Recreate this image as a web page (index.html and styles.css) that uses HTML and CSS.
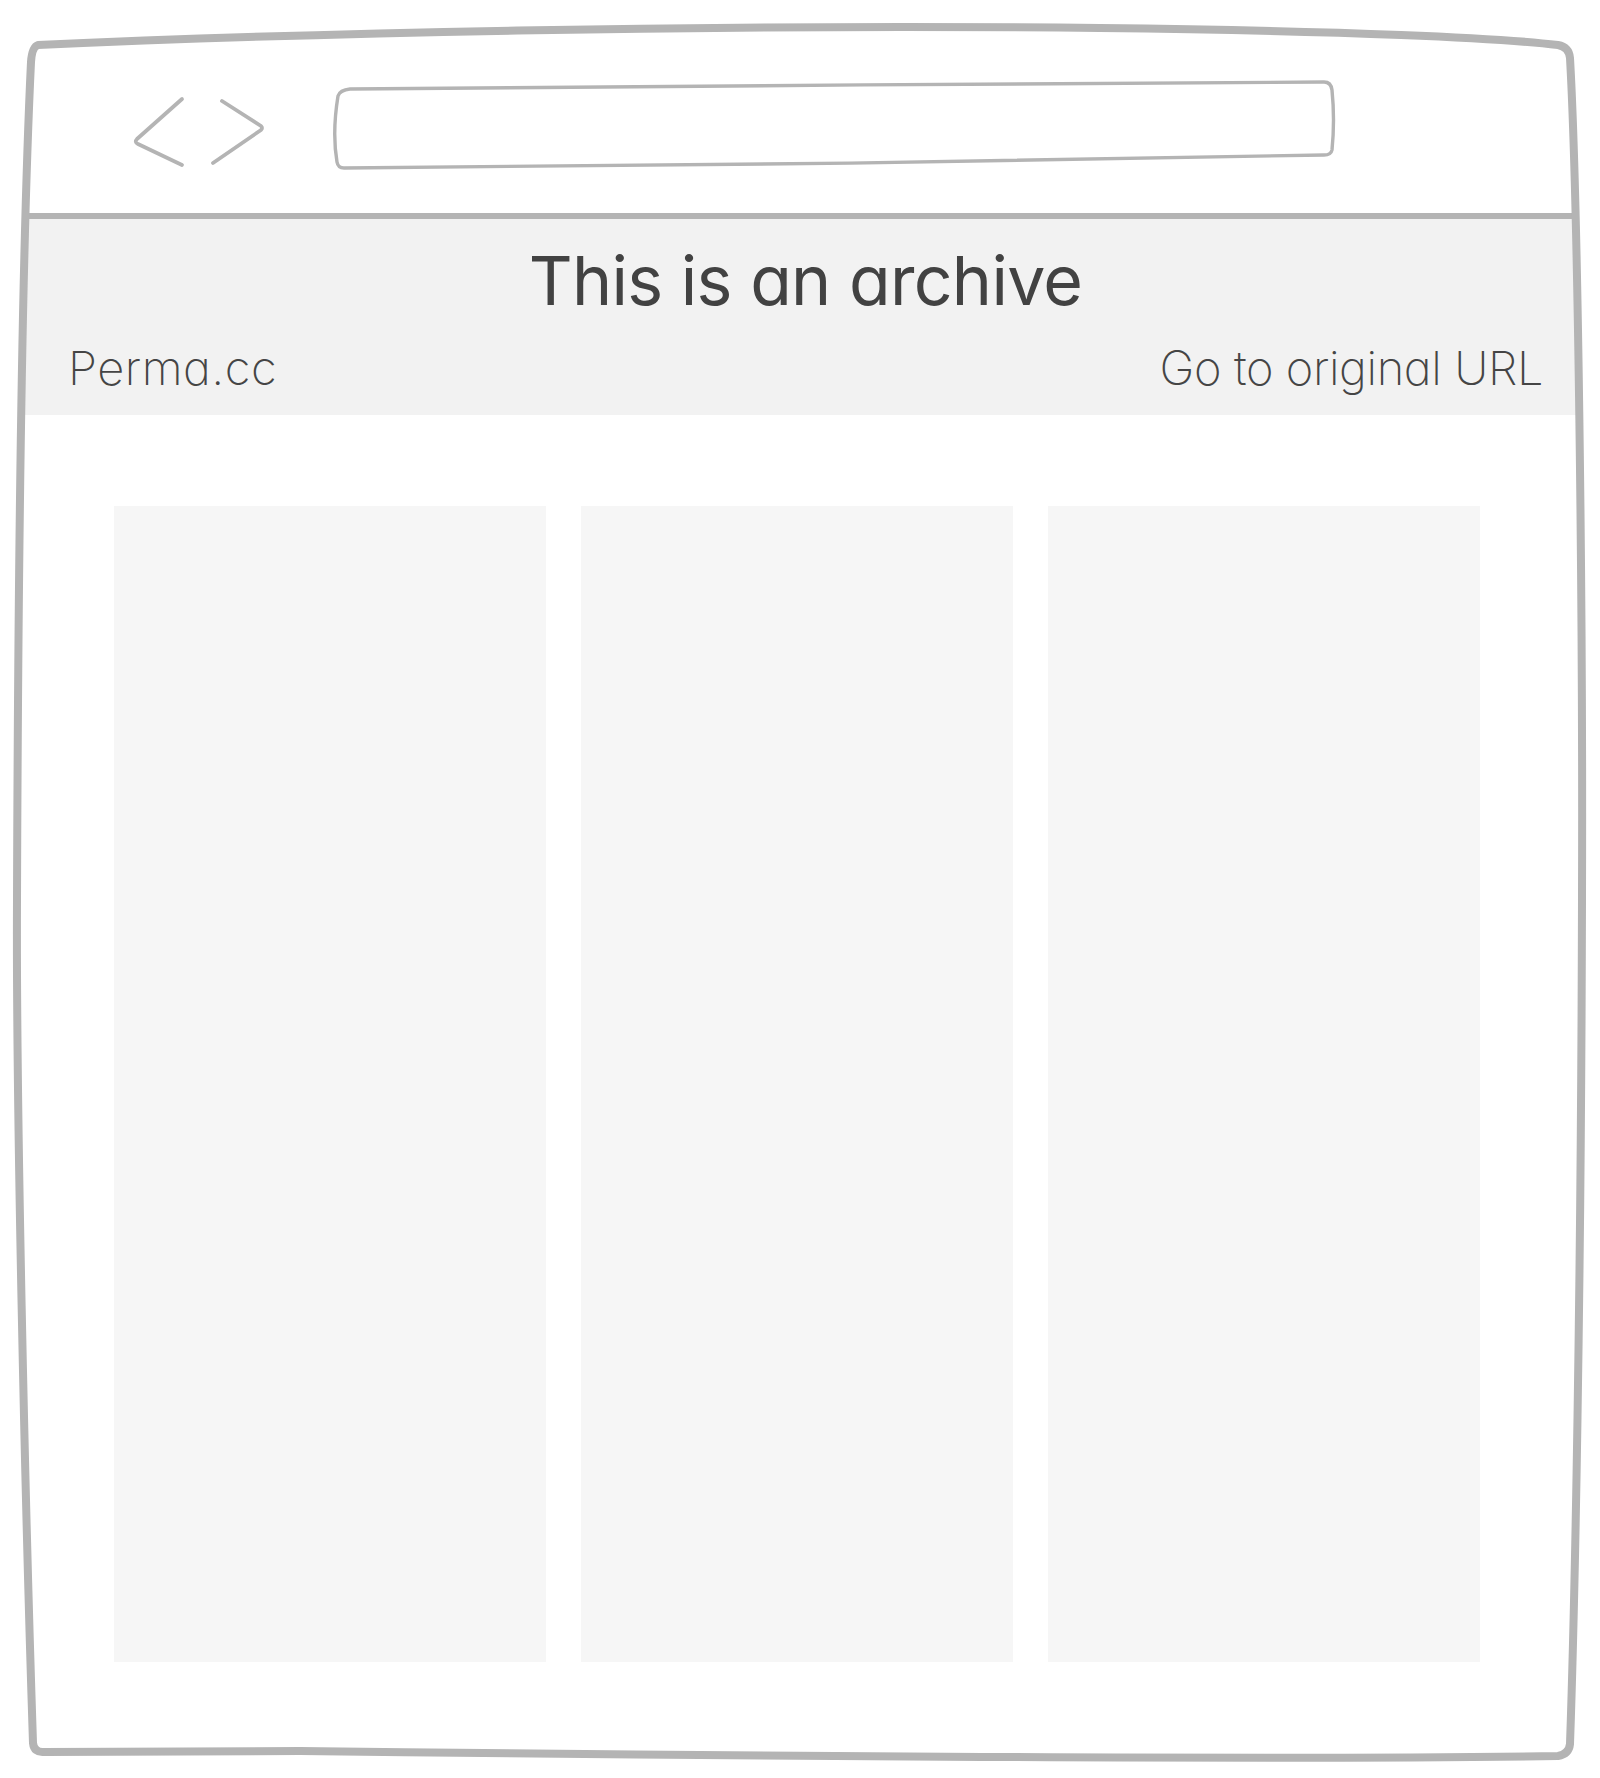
FILE: index.html
```html
<!DOCTYPE html>
<html lang="en">
<head>
<meta charset="utf-8">
<title>This is an archive</title>
<link rel="stylesheet" href="styles.css">
</head>
<body>
<div class="window">
  <div class="toolbar">
    <svg class="nav" width="140" height="94" viewBox="0 0 140 94" aria-hidden="true">
      <path d="M54 21 L9 61 Q6 64 10 66 L54 87" />
      <path d="M94 23 L133 48 Q135 50 133 52 L85 85" />
    </svg>
    <svg class="urlbar" width="1008" height="94" viewBox="0 0 1008 94" aria-hidden="true">
      <path d="M20 11 C 300 8, 700 6, 994 4 Q 1001 4 1002 12 Q 1005 42 1002 72 Q 1001 77 994 77 C 700 83, 300 89, 14 90 Q 8 90 7 84 Q 2 55 8 18 Q 10 12 20 11 Z" />
    </svg>
  </div>
  <div class="banner">
    <h1 class="title">This is an archive</h1>
    <div class="links">
      <span class="link link-home">Perma.cc</span>
      <span class="link">Go to original URL</span>
    </div>
  </div>
  <div class="content">
    <div class="col"></div>
    <div class="col"></div>
    <div class="col"></div>
  </div>
</div>
<svg class="frame" width="1600" height="1778" viewBox="0 0 1600 1778" aria-hidden="true">
  <path d="M38 45 C 300 33, 700 24, 1100 28 C 1350 31, 1500 38, 1558 45 Q 1569 47 1570 58 C 1578 200, 1583 600, 1582 900 C 1581 1300, 1575 1600, 1570 1744 Q 1569 1754 1558 1756 C 1300 1760, 700 1756, 300 1751 L 44 1752 Q 34 1753 33 1743 C 25 1500, 16 1100, 17 900 C 18 600, 22 250, 31 62 Q 32 47 38 45 Z" />
</svg>
</body>
</html>
```
FILE: styles.css
```css
html, body {
  margin: 0;
  padding: 0;
  background: #ffffff;
}

body {
  position: relative;
  width: 1600px;
  height: 1778px;
  overflow: hidden;
  font-family: "Inter", "Lato", "Liberation Sans", sans-serif;
  font-feature-settings: "cv11" 1;
  color: #434343;
}

.window {
  margin: 0 21px 0 22px;
}

.toolbar {
  display: flex;
  align-items: flex-start;
  height: 219px;
  box-sizing: border-box;
  padding: 78px 0 0 106px;
  border-bottom: 6px solid #b4b4b4;
}

.toolbar svg path {
  fill: none;
  stroke: #b4b4b4;
  stroke-linecap: round;
  stroke-linejoin: round;
}

.nav path {
  stroke-width: 3.8;
}

.urlbar {
  margin-left: 62px;
}

.urlbar path {
  stroke-width: 3.4;
}

.banner {
  background: #f2f2f2;
  height: 196px;
  box-sizing: border-box;
  padding: 21px 36px 0 46px;
  display: flex;
  flex-direction: column;
}

.title {
  margin: 0;
  font-size: 68px;
  line-height: 80px;
  font-weight: 400;
  text-align: center;
  letter-spacing: -0.7px;
  color: #424242;
}

.links {
  display: flex;
  justify-content: space-between;
  margin-top: 20px;
}

.link {
  font-size: 47px;
  line-height: 56px;
  font-weight: 200;
  letter-spacing: -0.4px;
  color: #454545;
}

.link-home {
  letter-spacing: 0.5px;
}

.content {
  display: grid;
  grid-template-columns: repeat(3, 432px);
  column-gap: 35px;
  padding: 91px 0 0 92px;
}

.col {
  height: 1156px;
  background: #f6f6f6;
}

.frame {
  position: absolute;
  left: 0;
  top: 0;
  pointer-events: none;
}

.frame path {
  fill: none;
  stroke: #b4b4b4;
  stroke-width: 8;
  stroke-linejoin: round;
}
```
